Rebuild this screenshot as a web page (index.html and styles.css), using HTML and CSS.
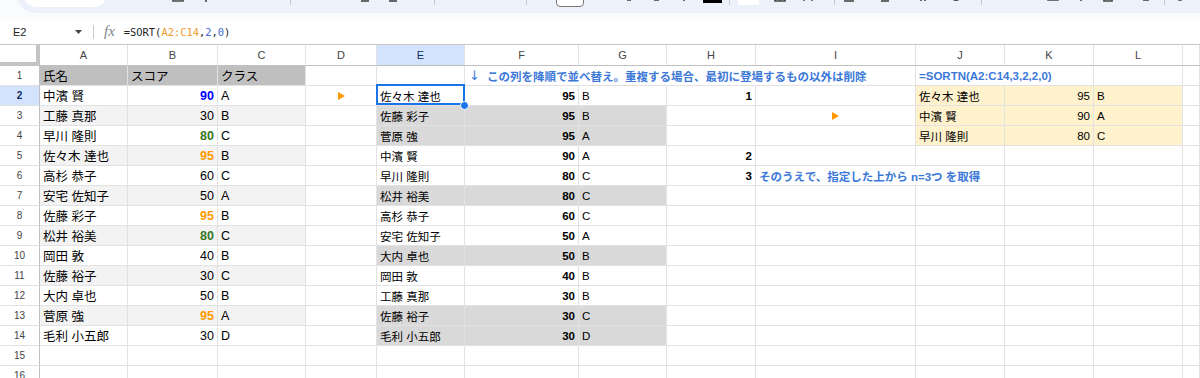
FILE: index.html
```html
<!doctype html>
<html lang="ja">
<head>
<meta charset="utf-8">
<title>SORTN</title>
<link rel="stylesheet" href="styles.css">
</head>
<body>
<div class="top">
<div class="tb-wrap">
<div class="tb">
	<span class="tb-search"></span>
	<svg class="ico g8" viewBox="0 0 14 20"><path d="M3 10c2-3 8-3 9 2"/></svg>
	<svg class="ico" viewBox="0 0 14 20"><path d="M11 10c-2-3-8-3-9 2"/></svg>
	<svg class="ico" viewBox="0 0 14 20"><path d="M2 12v6h10v-6"/></svg>
	<svg class="ico" viewBox="0 0 14 20"><path d="M7 14v5"/></svg>
	<span class="tb-zoom">100%</span>
	<span class="tb-sep g28"></span>
	<svg class="ico g67" viewBox="0 0 14 20"><path d="M3 18h8"/></svg>
	<svg class="ico" viewBox="0 0 14 20"><path d="M3 18h8"/></svg>
	<span class="tb-sep g34"></span>
	<span class="tb-sep g91"></span>
	<span class="tb-box g29"></span>
	<svg class="ico g38" viewBox="0 0 14 20"><path d="M5 17h4"/></svg>
	<svg class="ico g13" viewBox="0 0 14 20"><path d="M5 17h5"/></svg>
	<svg class="ico" viewBox="0 0 14 20"><path d="M7 14v4"/></svg>
	<span class="tb-color g12"><i></i></span>
	<span class="tb-sep g7"></span>
	<span class="tb-fill g8"></span>
	<svg class="ico" viewBox="0 0 14 20"><path d="M2 12v6h10v-6M7 12v6"/></svg>
	<svg class="ico" viewBox="0 0 14 20"><path d="M2 17h2M10 17h2"/></svg>
	<span class="tb-sep g19"></span>
	<svg class="ico g7" viewBox="0 0 14 20"><path d="M2 18h10"/></svg>
	<svg class="ico g22" viewBox="0 0 14 20"><path d="M3 18h8"/></svg>
	<svg class="ico g24" viewBox="0 0 14 20"><path d="M5 14v4M9 14v4"/></svg>
	<svg class="ico g19" viewBox="0 0 14 20"><path d="M3 15c2 3 6 3 8 0"/></svg>
	<span class="tb-sep g18"></span>
	<svg class="ico g36" viewBox="0 0 14 20"><path d="M2 16h10"/></svg>
	<svg class="ico" viewBox="0 0 14 20"><path d="M2 12v5h10v-5"/></svg>
	<svg class="ico" viewBox="0 0 14 20"><path d="M7 13v5"/></svg>
	<svg class="ico g13" viewBox="0 0 14 20"><path d="M3 12v6h8v-6"/></svg>
	<svg class="ico g24" viewBox="0 0 14 20"><path d="M4 17h6"/></svg>
	<span class="tb-sep g11"></span>
	<svg class="ico g8 ico-b" viewBox="0 0 14 20"><path d="M3 12c0 6 8 6 8 0"/></svg>
</div>
</div>
</div>

<div class="fbar">
	<div class="namebox"><span>E2</span><svg class="caret" viewBox="0 0 7 4"><path d="M0 0h7L3.5 4z"/></svg></div>
	<span class="vsep"></span>
	<span class="fx">fx</span>
	<span class="formula">=SORT(<span class="f-rng">A2:C14</span>,<span class="f-num">2</span>,<span class="f-num">0</span>)</span>
</div>

<div class="sheet">
	<!-- column headers -->
	<div class="c corner"></div>
	<div class="c ch">A</div><div class="c ch">B</div><div class="c ch">C</div><div class="c ch">D</div>
	<div class="c ch hl">E</div><div class="c ch">F</div><div class="c ch">G</div><div class="c ch">H</div>
	<div class="c ch">I</div><div class="c ch">J</div><div class="c ch">K</div><div class="c ch">L</div><div class="c ch"></div>

	<!-- 1 -->
	<div class="c rh">1</div>
	<div class="c l th">氏名</div><div class="c l th">スコア</div><div class="c l th">クラス</div>
	<div class="c"></div><div class="c"></div>
	<div class="c note s4"><span class="arr">↓</span>この列を降順で並べ替え。重複する場合、最初に登場するもの以外は削除</div>
	<div class="c note s2">=SORTN(A2:C14,3,2,2,0)</div>
	<div class="c"></div><div class="c"></div>

	<!-- 2 -->
	<div class="c rh hl">2</div>
	<div class="c l">中濱 賢</div><div class="c l n b blue">90</div><div class="c l">A</div>
	<div class="c mid"><svg class="tri" viewBox="0 0 7 8"><path d="M0 0L7 4L0 8z"/></svg></div>
	<div class="c sel">佐々木 達也</div><div class="c n b">95</div><div class="c">B</div>
	<div class="c n b">1</div><div class="c"></div>
	<div class="c yl">佐々木 達也</div><div class="c n yl">95</div><div class="c yl">B</div><div class="c"></div>

	<!-- 3 -->
	<div class="c rh">3</div>
	<div class="c l bd">工藤 真那</div><div class="c l n bd">30</div><div class="c l bd">B</div>
	<div class="c"></div>
	<div class="c gy">佐藤 彩子</div><div class="c n b gy">95</div><div class="c gy">B</div>
	<div class="c"></div>
	<div class="c mid"><svg class="tri" viewBox="0 0 7 8"><path d="M0 0L7 4L0 8z"/></svg></div>
	<div class="c yl">中濱 賢</div><div class="c n yl">90</div><div class="c yl">A</div><div class="c"></div>

	<!-- 4 -->
	<div class="c rh">4</div>
	<div class="c l">早川 隆則</div><div class="c l n b green">80</div><div class="c l">C</div>
	<div class="c"></div>
	<div class="c gy">菅原 強</div><div class="c n b gy">95</div><div class="c gy">A</div>
	<div class="c"></div><div class="c"></div>
	<div class="c yl">早川 隆則</div><div class="c n yl">80</div><div class="c yl">C</div><div class="c"></div>

	<!-- 5 -->
	<div class="c rh">5</div>
	<div class="c l bd">佐々木 達也</div><div class="c l n b orange bd">95</div><div class="c l bd">B</div>
	<div class="c"></div>
	<div class="c">中濱 賢</div><div class="c n b">90</div><div class="c">A</div>
	<div class="c n b">2</div><div class="c"></div>
	<div class="c"></div><div class="c"></div><div class="c"></div><div class="c"></div>

	<!-- 6 -->
	<div class="c rh">6</div>
	<div class="c l">高杉 恭子</div><div class="c l n">60</div><div class="c l">C</div>
	<div class="c"></div>
	<div class="c">早川 隆則</div><div class="c n b">80</div><div class="c">C</div>
	<div class="c n b">3</div>
	<div class="c note s2">そのうえで、指定した上から n=3つ を取得</div>
	<div class="c"></div><div class="c"></div><div class="c"></div>

	<!-- 7 -->
	<div class="c rh">7</div>
	<div class="c l bd">安宅 佐知子</div><div class="c l n bd">50</div><div class="c l bd">A</div>
	<div class="c"></div>
	<div class="c gy">松井 裕美</div><div class="c n b gy">80</div><div class="c gy">C</div>
	<div class="c"></div><div class="c"></div><div class="c"></div><div class="c"></div><div class="c"></div><div class="c"></div>

	<!-- 8 -->
	<div class="c rh">8</div>
	<div class="c l">佐藤 彩子</div><div class="c l n b orange">95</div><div class="c l">B</div>
	<div class="c"></div>
	<div class="c">高杉 恭子</div><div class="c n b">60</div><div class="c">C</div>
	<div class="c"></div><div class="c"></div><div class="c"></div><div class="c"></div><div class="c"></div><div class="c"></div>

	<!-- 9 -->
	<div class="c rh">9</div>
	<div class="c l bd">松井 裕美</div><div class="c l n b green bd">80</div><div class="c l bd">C</div>
	<div class="c"></div>
	<div class="c">安宅 佐知子</div><div class="c n b">50</div><div class="c">A</div>
	<div class="c"></div><div class="c"></div><div class="c"></div><div class="c"></div><div class="c"></div><div class="c"></div>

	<!-- 10 -->
	<div class="c rh">10</div>
	<div class="c l">岡田 敦</div><div class="c l n">40</div><div class="c l">B</div>
	<div class="c"></div>
	<div class="c gy">大内 卓也</div><div class="c n b gy">50</div><div class="c gy">B</div>
	<div class="c"></div><div class="c"></div><div class="c"></div><div class="c"></div><div class="c"></div><div class="c"></div>

	<!-- 11 -->
	<div class="c rh">11</div>
	<div class="c l bd">佐藤 裕子</div><div class="c l n bd">30</div><div class="c l bd">C</div>
	<div class="c"></div>
	<div class="c">岡田 敦</div><div class="c n b">40</div><div class="c">B</div>
	<div class="c"></div><div class="c"></div><div class="c"></div><div class="c"></div><div class="c"></div><div class="c"></div>

	<!-- 12 -->
	<div class="c rh">12</div>
	<div class="c l">大内 卓也</div><div class="c l n">50</div><div class="c l">B</div>
	<div class="c"></div>
	<div class="c">工藤 真那</div><div class="c n b">30</div><div class="c">B</div>
	<div class="c"></div><div class="c"></div><div class="c"></div><div class="c"></div><div class="c"></div><div class="c"></div>

	<!-- 13 -->
	<div class="c rh">13</div>
	<div class="c l bd">菅原 強</div><div class="c l n b orange bd">95</div><div class="c l bd">A</div>
	<div class="c"></div>
	<div class="c gy">佐藤 裕子</div><div class="c n b gy">30</div><div class="c gy">C</div>
	<div class="c"></div><div class="c"></div><div class="c"></div><div class="c"></div><div class="c"></div><div class="c"></div>

	<!-- 14 -->
	<div class="c rh">14</div>
	<div class="c l">毛利 小五郎</div><div class="c l n">30</div><div class="c l">D</div>
	<div class="c"></div>
	<div class="c gy">毛利 小五郎</div><div class="c n b gy">30</div><div class="c gy">D</div>
	<div class="c"></div><div class="c"></div><div class="c"></div><div class="c"></div><div class="c"></div><div class="c"></div>

	<!-- 15 -->
	<div class="c rh">15</div>
	<div class="c"></div><div class="c"></div><div class="c"></div><div class="c"></div><div class="c"></div><div class="c"></div>
	<div class="c"></div><div class="c"></div><div class="c"></div><div class="c"></div><div class="c"></div><div class="c"></div><div class="c"></div>

	<!-- 16 -->
	<div class="c rh">16</div>
	<div class="c"></div><div class="c"></div><div class="c"></div><div class="c"></div><div class="c"></div><div class="c"></div>
	<div class="c"></div><div class="c"></div><div class="c"></div><div class="c"></div><div class="c"></div><div class="c"></div><div class="c"></div>
</div>
</body>
</html>
```

FILE: styles.css
```css
html, body
{
	margin:0px;
	padding:0px;
}
body
{
	width:1200px;
	height:378px;
	overflow:hidden;
	background:#FFF;
	font-family:"Liberation Sans", "Noto Sans CJK JP", sans-serif;
	color:#000;
}

/* toolbar (only its lower edge is on screen) */
.top
{
	height:19px;
	background:#F9FBFD;
}
.tb-wrap
{
	height:13px;
	overflow:hidden;
}
.tb
{
	display:flex;
	align-items:center;
	height:40px;
	margin:-27px 0 0 16px;
	padding-left:7px;
	background:#EDF2FA;
	border-radius:24px 0 0 24px;
}
.tb > *
{
	flex:none;
	margin-left:14px;
}
.tb-search
{
	width:84px;
	height:27px;
	margin-left:0px !important;
	background:#FFF;
	border-radius:14px;
}
.ico
{
	width:14px;
	height:20px;
	fill:none;
	stroke:#444746;
	stroke-width:1.6;
}
.ico-b
{
	stroke-width:2.4;
	stroke:#1F1F1F;
}
.tb-zoom
{
	width:34px;
	font-size:13px;
	color:#444746;
	margin-left:15px;
}
.tb-sep
{
	width:1px;
	height:24px;
	background:#C7C7C7;
}
.tb-box
{
	width:26px;
	height:25px;
	border:1px solid #747775;
	border-radius:4px;
	background:#FFF;
}
.tb-color
{
	width:19px;
	height:20px;
	display:flex;
	align-items:flex-end;
}
.tb-color i
{
	width:19px;
	height:4px;
	background:#000;
}
.tb-fill
{
	width:21px;
	height:23px;
	background:#FFF;
}
.g7{margin-left:7px !important;}
.g8{margin-left:8px !important;}
.g11{margin-left:11px !important;}
.g12{margin-left:12px !important;}
.g13{margin-left:13px !important;}
.g18{margin-left:18px !important;}
.g19{margin-left:19px !important;}
.g22{margin-left:22px !important;}
.g24{margin-left:24px !important;}
.g28{margin-left:28px !important;}
.g29{margin-left:29px !important;}
.g34{margin-left:34px !important;}
.g36{margin-left:36px !important;}
.g38{margin-left:38px !important;}
.g67{margin-left:67px !important;}
.g91{margin-left:91px !important;}

/* formula bar */
.fbar
{
	display:flex;
	align-items:center;
	height:26px;
	box-sizing:border-box;
	border-bottom:1px solid #C4C7C5;
	background:#FFF;
}
.namebox
{
	display:flex;
	align-items:center;
	width:93px;
	box-sizing:border-box;
	padding:0 11px 0 13px;
	font-size:11px;
	color:#1F1F1F;
}
.caret
{
	width:7px;
	height:4px;
	margin-left:auto;
	fill:#444746;
}
.vsep
{
	width:1px;
	height:14px;
	background:#C4C7C5;
}
.fx
{
	margin-left:10px;
	font-family:"Liberation Serif", serif;
	font-style:italic;
	font-size:15px;
	color:#80868B;
}
.formula
{
	margin-left:9px;
	font-family:"DejaVu Sans Mono", monospace;
	font-size:10.4px;
	color:#1F1F1F;
}
.f-rng
{
	color:#EE9A2C;
}
.f-num
{
	color:#3D6AD6;
}

/* grid */
.sheet
{
	display:grid;
	grid-template-columns:40px 88px 90px 88px 71px 88px 114px 88px 89px 160px 89px 89px 89px 1fr;
	grid-template-rows:21px;
	grid-auto-rows:20px;
}
.c
{
	display:flex;
	align-items:center;
	box-sizing:border-box;
	min-width:0;
	padding:0 3px;
	border-right:1px solid #E2E2E2;
	border-bottom:1px solid #E2E2E2;
	font-size:11.5px;
	white-space:nowrap;
	overflow:hidden;
}
.l
{
	font-size:12.5px;
}
.corner
{
	border-right:4px solid #C4C4C4;
	border-bottom:4px solid #C4C4C4;
}
.ch
{
	justify-content:center;
	font-size:11px;
	color:#444;
	border-bottom-color:#C0C0C0;
}
.rh
{
	justify-content:center;
	font-size:10px;
	color:#444;
	border-right-color:#C0C0C0;
}
.hl
{
	background:#D3E3FD;
	color:#0B2B66;
	font-weight:bold;
}
.ch.hl
{
	font-weight:normal;
}
.th{background:#BFBFBF;}
.bd{background:#F3F3F3;}
.gy{background:#D9D9D9;}
.yl{background:#FFF2CC;}
.n{justify-content:flex-end;}
.b{font-weight:bold;}
.blue{color:#0000FF;}
.green{color:#38761D;}
.orange{color:#FF9900;}
.note
{
	color:#3C78D8;
	font-weight:bold;
}
.arr
{
	width:18px;
	padding-left:1px;
	font-family:"DejaVu Sans", sans-serif;
	font-weight:normal;
	font-size:13px;
}
.s2{grid-column:span 2;}
.s4{grid-column:span 4;}
.mid{justify-content:center;}
.tri
{
	width:7px;
	height:8px;
	fill:#FF9900;
}

/* selected cell */
.sel
{
	position:relative;
	overflow:visible;
	z-index:2;
}
.sel::before
{
	content:"";
	position:absolute;
	left:-1px;
	top:-2px;
	right:-1px;
	bottom:0px;
	border:2px solid #1A73E8;
}
.sel::after
{
	content:"";
	position:absolute;
	right:-5px;
	bottom:-5px;
	width:7px;
	height:7px;
	border:1px solid #FFF;
	border-radius:50%;
	background:#1A73E8;
}
```
